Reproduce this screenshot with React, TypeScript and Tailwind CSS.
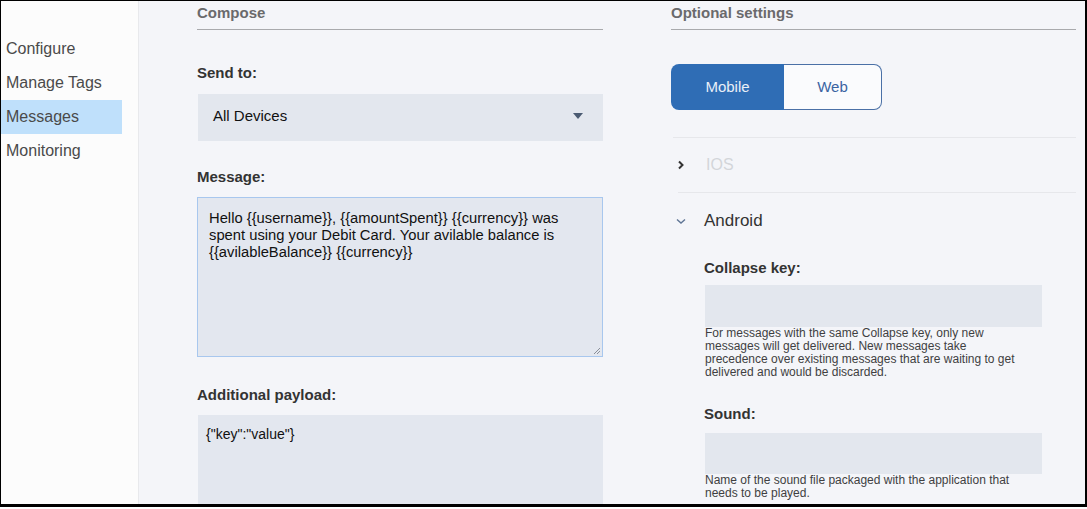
import React from "react";

const font = { fontFamily: '"Liberation Sans", Arial, sans-serif' };

function SideItem({ label, active }: { label: string; active?: boolean }) {
  return (
    <div
      className={`h-[34px] flex items-center pl-[5px] text-[16px] text-[#4a4a4a] ${
        active ? "bg-[#bfe0fb] w-[121px]" : ""
      }`}
    >
      {label}
    </div>
  );
}

function SectionHeader({ title }: { title: string }) {
  return (
    <div className="h-[29px] border-b border-[#a9aaad] pt-[2px]">
      <div className="text-[15px] leading-[20px] font-bold text-[#6a6a6c]">{title}</div>
    </div>
  );
}

function Label({ children, className = "" }: { children: React.ReactNode; className?: string }) {
  return <div className={`text-[15px] leading-[20px] font-bold text-[#333] ${className}`}>{children}</div>;
}

export default function App() {
  return (
    <div
      style={font}
      className="w-[1087px] h-[507px] box-border border-t border-l border-r-2 border-b-[3px] border-black flex overflow-hidden bg-white"
    >
      {/* Sidebar */}
      <div className="w-[138px] shrink-0 bg-[#fcfcfc] border-r border-[#e8e9ec] pt-[31px]">
        <SideItem label="Configure" />
        <SideItem label="Manage Tags" />
        <SideItem label="Messages" active />
        <SideItem label="Monitoring" />
      </div>

      {/* Main */}
      <div className="flex-1 bg-[#f4f5f9] pl-[58px] grid grid-cols-[406px_405px] gap-x-[68px] items-start">
        {/* Compose column */}
        <div className="flex flex-col">
          <SectionHeader title="Compose" />
          <Label className="mt-[33px]">Send to:</Label>
          <div className="mt-[11px] h-[47px] bg-[#e3e7ee] flex items-center justify-between pl-[15px] pr-[20px] ml-[1px]">
            <span className="text-[15px] text-[#111] mt-[-2px]">All Devices</span>
            <svg width="10" height="6" viewBox="0 0 10 6" className="mt-[-4px]">
              <path d="M0 0 L10 0 L5 6 Z" fill="#4b5b72" />
            </svg>
          </div>
          <Label className="mt-[26px]">Message:</Label>
          <div className="mt-[10px] h-[160px] relative border border-[#a8c7ee] bg-[#e3e7ef] pl-[11px] pr-[30px] pt-[12px] text-[14.75px] leading-[17px] text-[#111]">
            Hello {"{{username}}"}, {"{{amountSpent}}"} {"{{currency}}"} was spent using your Debit Card. Your avilable
            balance is {"{{avilableBalance}}"} {"{{currency}}"}
            <svg width="9" height="9" viewBox="0 0 9 9" className="absolute right-[1px] bottom-[1px]">
              <path d="M8 2 L2 8 M8 5 L5 8" stroke="#8a8f99" strokeWidth="1" />
            </svg>
          </div>
          <Label className="mt-[28px]">Additional payload:</Label>
          <div className="mt-[10px] h-[120px] bg-[#e3e7ef] ml-[1px] pl-[8px] pt-[11px] text-[14px] leading-[17px] text-[#111]">
            {'{"key":"value"}'}
          </div>
        </div>

        {/* Optional settings column */}
        <div className="flex flex-col">
          <SectionHeader title="Optional settings" />
          <div className="mt-[34px] flex w-[211px] h-[46px]">
            <div className="w-[113px] bg-[#2f6db5] rounded-l-[8px] flex items-center justify-center text-[15px] text-[#e9eff8]">
              Mobile
            </div>
            <div className="flex-1 bg-[#fafbfd] border border-l-0 border-[#4a70a6] rounded-r-[8px] flex items-center justify-center text-[15px] text-[#3a64a2]">
              Web
            </div>
          </div>
          <div className="mt-[27px] ml-[2px] border-t border-[#e6e7eb] h-[55px] flex items-center">
            <svg width="8" height="10" viewBox="0 0 8 10" className="ml-[4px]">
              <path d="M2 1.5 L5.5 5 L2 8.5" stroke="#333" strokeWidth="2" fill="none" />
            </svg>
            <span className="ml-[21px] text-[16px] text-[#d3d5da]">IOS</span>
          </div>
          <div className="ml-[7px] border-t border-[#e6e7eb]" />
          <div className="mt-[16px] h-[24px] flex items-center">
            <svg width="10" height="7" viewBox="0 0 10 7" className="ml-[5px]">
              <path d="M1 1.5 L5 5 L9 1.5" stroke="#5f7595" strokeWidth="1.4" fill="none" />
            </svg>
            <span className="ml-[18px] text-[17px] text-[#333]">Android</span>
          </div>
          <div className="pl-[33px] pr-[34px] flex flex-col">
            <Label className="mt-[25px]">Collapse key:</Label>
            <div className="mt-[7px] h-[42px] bg-[#e3e7ee] ml-[1px]" />
            <div className="text-[12px] leading-[13px] text-[#3f3f42] ml-[1px] w-[325px]">
              For messages with the same Collapse key, only new messages will get delivered. New messages take
              precedence over existing messages that are waiting to get delivered and would be discarded.
            </div>
            <Label className="mt-[25px]">Sound:</Label>
            <div className="mt-[9px] h-[41px] bg-[#e3e7ee] ml-[1px]" />
            <div className="text-[12px] leading-[13px] text-[#3f3f42] ml-[1px] w-[325px]">
              Name of the sound file packaged with the application that needs to be played.
            </div>
          </div>
        </div>
      </div>
    </div>
  );
}
